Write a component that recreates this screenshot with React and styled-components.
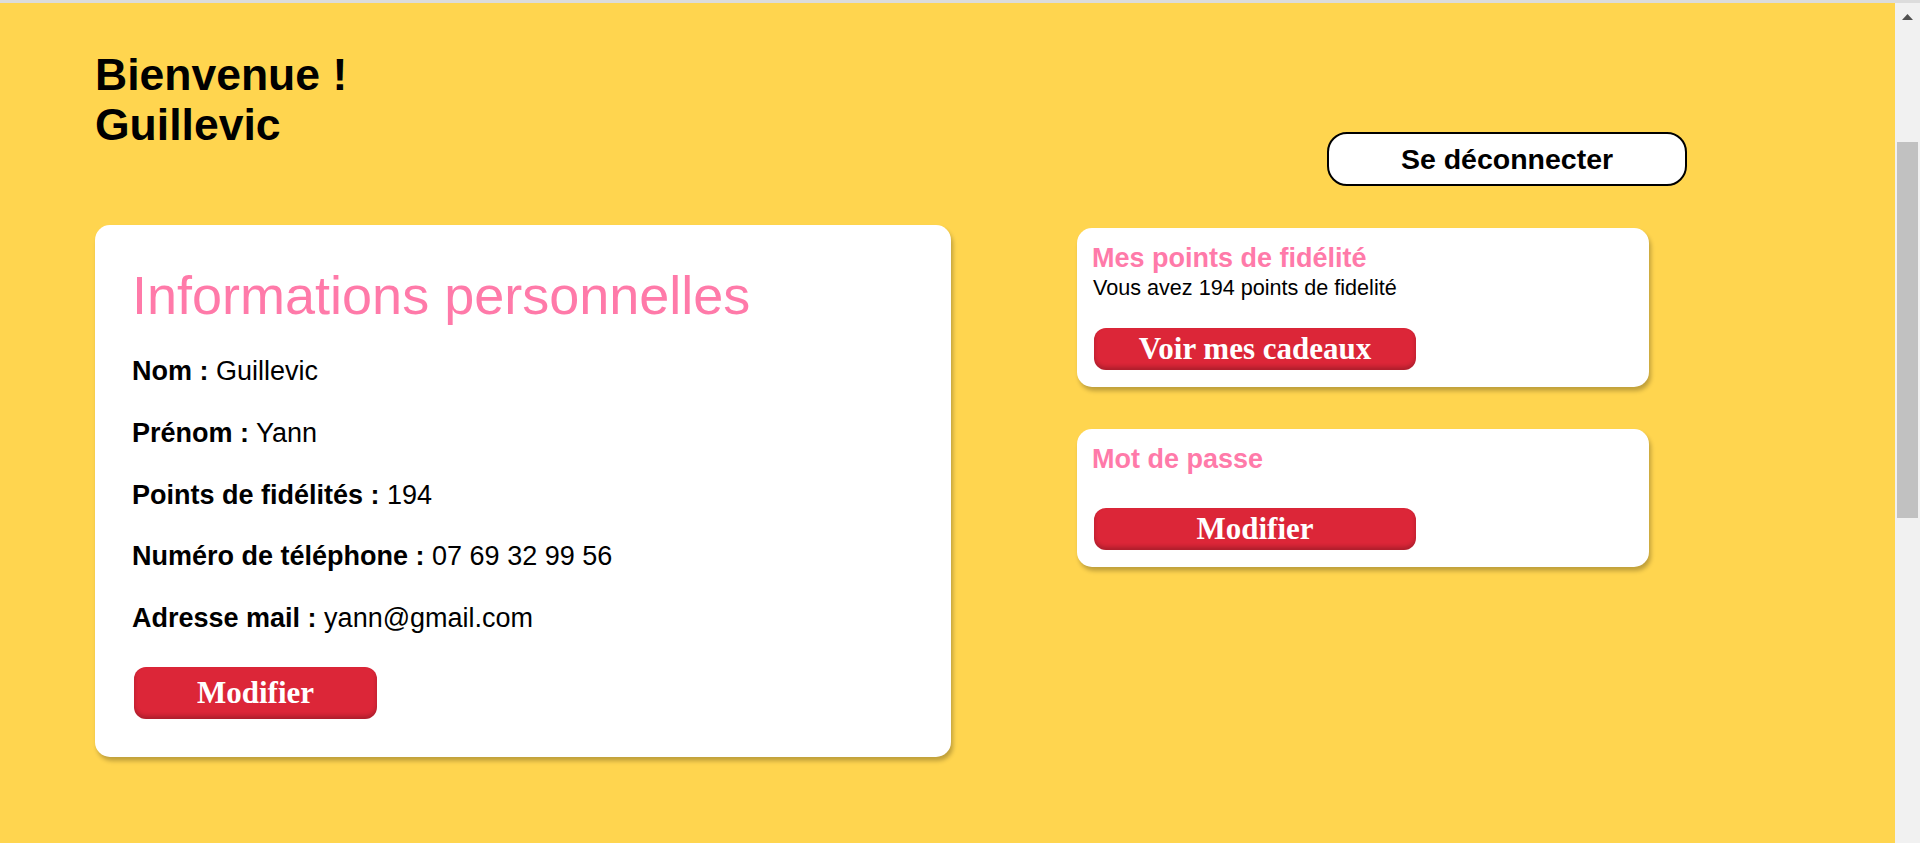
import React from "react";
import styled, { createGlobalStyle } from "styled-components";

const GlobalStyle = createGlobalStyle`
  html, body {
    margin: 0;
    padding: 0;
    height: 100%;
    overflow: hidden;
  }
  body {
    font-family: "Liberation Sans", Arial, sans-serif;
    color: #000;
  }
  #root {
    height: 100%;
  }
  * {
    box-sizing: border-box;
  }
`;

const Window = styled.div`
  height: 843px;
  display: flex;
  flex-direction: column;
  border-top: 3px solid #dcdcdc;
  background: #ffd54f;
`;

const Viewport = styled.div`
  flex: 1;
  display: flex;
  min-height: 0;
`;

const Page = styled.main`
  flex: 1;
  padding: 47px 0 0 95px;
  background: #ffd54f;
`;

const Header = styled.header`
  display: flex;
  justify-content: space-between;
  align-items: flex-start;
  padding-right: 208px;
`;

const Greeting = styled.h1`
  margin: 0;
  font-size: 44.5px;
  line-height: 50px;
  font-weight: 700;
`;

const LogoutButton = styled.button`
  margin-top: 82px;
  width: 360px;
  height: 54px;
  padding: 0;
  border: 2px solid #000;
  border-radius: 20px;
  background: #fff;
  color: #000;
  font-family: "Liberation Sans", Arial, sans-serif;
  font-size: 28.5px;
  font-weight: 700;
  cursor: pointer;
`;

const Main = styled.div`
  display: flex;
  align-items: flex-start;
  margin-top: 39px;
`;

const Card = styled.section`
  background: #fff;
  border-radius: 15px;
  box-shadow: 2px 4px 4px rgba(0, 0, 0, 0.25);
  display: flex;
  flex-direction: column;
  align-items: flex-start;
`;

const InfoCard = styled(Card)`
  width: 856px;
  padding: 39px 37px 38px;
`;

const InfoTitle = styled.h2`
  margin: 0 0 31px;
  font-size: 54px;
  line-height: 62px;
  font-weight: 400;
  color: #ff7aa9;
`;

const FieldList = styled.div`
  display: flex;
  flex-direction: column;
  gap: 32.8px;
`;

const Field = styled.p`
  margin: 0;
  font-size: 27px;
  line-height: 29px;
`;

const Label = styled.b`
  font-weight: 700;
`;

const RedButton = styled.button`
  width: ${(p) => p.$w}px;
  height: ${(p) => p.$h}px;
  margin: ${(p) => p.$mt}px 0 0 2px;
  padding: 0;
  border: none;
  border-radius: 12px;
  background: #dc2638;
  color: #fff;
  font-family: "Liberation Serif", "Times New Roman", serif;
  font-size: 31px;
  font-weight: 700;
  box-shadow: inset 0 -3px 4px rgba(0, 0, 0, 0.22);
  cursor: pointer;
`;

const SideColumn = styled.div`
  display: flex;
  flex-direction: column;
  gap: 42px;
  width: 572px;
  margin: 3px 0 0 126px;
`;

const SideCard = styled(Card)`
  padding: 15px 15px 17px;
`;

const SideTitle = styled.h3`
  margin: 0;
  font-size: 27px;
  line-height: 31px;
  font-weight: 700;
  color: #ff7aa9;
`;

const SideText = styled.p`
  margin: 2px 0 0 1px;
  font-size: 21.6px;
  line-height: 24px;
`;

const Scrollbar = styled.div`
  width: 25px;
  background: #f1f1f1;
  display: flex;
  flex-direction: column;
  align-items: center;
`;

const ScrollArrow = styled.div`
  width: 100%;
  height: 27px;
  display: flex;
  align-items: center;
  justify-content: center;
`;

const ScrollThumb = styled.div`
  margin-top: 112px;
  width: 21px;
  height: 376px;
  background: #c1c1c1;
`;

const fields = [
  ["Nom", "Guillevic"],
  ["Prénom", "Yann"],
  ["Points de fidélités", "194"],
  ["Numéro de téléphone", "07 69 32 99 56"],
  ["Adresse mail", "yann@gmail.com"],
];

export default function App() {
  return (
    <>
      <GlobalStyle />
      <Window>
        <Viewport>
          <Page>
            <Header>
              <Greeting>
                Bienvenue !
                <br />
                Guillevic
              </Greeting>
              <LogoutButton>Se déconnecter</LogoutButton>
            </Header>
            <Main>
              <InfoCard>
                <InfoTitle>Informations personnelles</InfoTitle>
                <FieldList>
                  {fields.map(([label, value]) => (
                    <Field key={label}>
                      <Label>{label} :</Label> {value}
                    </Field>
                  ))}
                </FieldList>
                <RedButton $w={243} $h={52} $mt={34}>
                  Modifier
                </RedButton>
              </InfoCard>
              <SideColumn>
                <SideCard>
                  <SideTitle>Mes points de fidélité</SideTitle>
                  <SideText>Vous avez 194 points de fidelité</SideText>
                  <RedButton $w={322} $h={42} $mt={28}>
                    Voir mes cadeaux
                  </RedButton>
                </SideCard>
                <SideCard>
                  <SideTitle>Mot de passe</SideTitle>
                  <RedButton $w={322} $h={42} $mt={33}>
                    Modifier
                  </RedButton>
                </SideCard>
              </SideColumn>
            </Main>
          </Page>
          <Scrollbar>
            <ScrollArrow>
              <svg width="11" height="6" viewBox="0 0 11 6">
                <path d="M0 6 L5.5 0 L11 6 Z" fill="#505050" />
              </svg>
            </ScrollArrow>
            <ScrollThumb />
          </Scrollbar>
        </Viewport>
      </Window>
    </>
  );
}
